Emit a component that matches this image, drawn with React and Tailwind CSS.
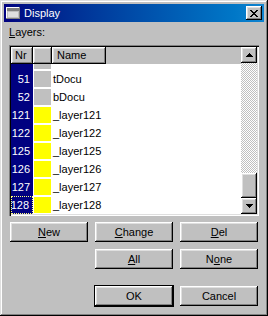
import React from "react";

const raised =
  "shadow-[inset_-1px_-1px_0_#000,inset_1px_1px_0_#fff,inset_-2px_-2px_0_#808080,inset_2px_2px_0_#dfdfdf]";

function Btn({ children, className = "" }) {
  return (
    <div
      className={`h-[20px] w-[78px] flex items-center justify-center bg-[#c0c0c0] text-[11px] text-black shadow-[inset_-1px_-1px_0_#000,inset_1px_1px_0_#fff,inset_-2px_-2px_0_#808080,inset_2px_2px_0_#dfdfdf] ${className}`}
    >
      {children}
    </div>
  );
}

function ArrowUp() {
  return (
    <svg width="7" height="4" viewBox="0 0 7 4" shapeRendering="crispEdges">
      <rect x="3" y="0" width="1" height="1" fill="#000" />
      <rect x="2" y="1" width="3" height="1" fill="#000" />
      <rect x="1" y="2" width="5" height="1" fill="#000" />
      <rect x="0" y="3" width="7" height="1" fill="#000" />
    </svg>
  );
}

function ArrowDown() {
  return (
    <svg width="7" height="4" viewBox="0 0 7 4" shapeRendering="crispEdges">
      <rect x="0" y="0" width="7" height="1" fill="#000" />
      <rect x="1" y="1" width="5" height="1" fill="#000" />
      <rect x="2" y="2" width="3" height="1" fill="#000" />
      <rect x="3" y="3" width="1" height="1" fill="#000" />
    </svg>
  );
}

function CloseGlyph() {
  const rows = [
    "XX....XX",
    ".XX..XX.",
    "..XXXX..",
    "...XX...",
    "..XXXX..",
    ".XX..XX.",
    "XX....XX",
  ];
  const rects = [];
  rows.forEach((r, y) =>
    r.split("").forEach((c, x) => {
      if (c === "X") rects.push(<rect key={`${x}-${y}`} x={x} y={y} width="1" height="1" fill="#000" />);
    })
  );
  return (
    <svg width="8" height="7" viewBox="0 0 8 7" shapeRendering="crispEdges">
      {rects}
    </svg>
  );
}

function TitleIcon() {
  return (
    <svg width="14" height="12" viewBox="0 0 14 12" shapeRendering="crispEdges">
      <rect x="0" y="0" width="14" height="12" fill="#808080" />
      <rect x="0" y="0" width="13" height="11" fill="#fff" />
      <rect x="1" y="1" width="12" height="10" fill="#c0c0c0" />
      <rect x="1" y="1" width="12" height="3" fill="#808080" />
      <rect x="2" y="5" width="10" height="5" fill="#dfdfdf" />
    </svg>
  );
}

const rows = [
  { nr: 50, name: "", color: "#c0c0c0" },
  { nr: 51, name: "tDocu", color: "#c0c0c0" },
  { nr: 52, name: "bDocu", color: "#c0c0c0" },
  { nr: 121, name: "_layer121", color: "#ffff00" },
  { nr: 122, name: "_layer122", color: "#ffff00" },
  { nr: 125, name: "_layer125", color: "#ffff00" },
  { nr: 126, name: "_layer126", color: "#ffff00" },
  { nr: 127, name: "_layer127", color: "#ffff00" },
  { nr: 128, name: "_layer128", color: "#ffff00", focus: true },
];

export default function App() {
  return (
    <div className="w-[268px] h-[316px] bg-[#c0c0c0] p-[4px] flex flex-col font-['Liberation_Sans',Arial,sans-serif] text-[11px] leading-[13px] text-black shadow-[inset_-1px_-1px_0_#000,inset_1px_1px_0_#dfdfdf,inset_-2px_-2px_0_#808080,inset_2px_2px_0_#fff]">
      {/* Title bar */}
      <div className="h-[18px] flex items-center bg-gradient-to-r from-[#000080] to-[#1084d0] text-white">
        <div className="ml-[2px] w-[14px] h-[12px] flex">
          <TitleIcon />
        </div>
        <div className="ml-[4px] text-[11px]">Display</div>
        <div className="flex-1" />
        <div className={`mr-[2px] w-[16px] h-[14px] bg-[#c0c0c0] flex items-center justify-center ${raised}`}>
          <CloseGlyph />
        </div>
      </div>

      {/* Content */}
      <div className="flex flex-col px-[5px]">
        <div className="mt-[4px] h-[13px]">
          <span className="underline">L</span>ayers:
        </div>

        {/* List view */}
        <div className="mt-[6px] h-[171px] w-[250px] p-[2px] bg-white flex shadow-[inset_1px_1px_0_#808080,inset_2px_2px_0_#000,inset_-1px_-1px_0_#fff,inset_-2px_-2px_0_#dfdfdf]">
          <div className="flex-1 flex flex-col min-w-0">
            {/* Header */}
            <div className="h-[17px] flex bg-[#c0c0c0] shrink-0">
              <div className={`w-[22px] pl-[4px] flex items-center ${raised}`}>Nr</div>
              <div className={`w-[19px] ${raised}`} />
              <div className={`w-[54px] pl-[5px] flex items-center ${raised}`}>Name</div>
              <div className="flex-1" />
            </div>
            {/* Rows */}
            <div className="flex-1 overflow-hidden">
              <div className="-mt-[12px] flex flex-col">
                {rows.map((r) => (
                  <div key={r.nr} className="h-[18px] flex shrink-0">
                    <div
                      className={`w-[22px] bg-[#000080] text-white flex items-center justify-end pr-[3px] ${
                        r.focus ? "border border-dotted border-[#ffff7f] pr-[2px]" : ""
                      }`}
                    >
                      {r.focus || r.nr !== 50 ? r.nr : ""}
                    </div>
                    <div className="w-[1px]" />
                    <div className="w-[17px] py-[1px]">
                      <div className="w-[17px] h-[16px]" style={{ backgroundColor: r.color }} />
                    </div>
                    <div className="pl-[2px] flex items-center">{r.name}</div>
                  </div>
                ))}
              </div>
            </div>
          </div>
          {/* Scrollbar */}
          <div className="w-[16px] flex flex-col">
            <div className={`h-[16px] bg-[#c0c0c0] flex items-center justify-center ${raised}`}>
              <ArrowUp />
            </div>
            <div className="flex-1 bg-[conic-gradient(#fff_25%,#c0c0c0_0_50%,#fff_0_75%,#c0c0c0_0)] bg-[length:2px_2px]" />
            <div className={`h-[25px] bg-[#c0c0c0] ${raised}`} />
            <div className={`h-[16px] bg-[#c0c0c0] flex items-center justify-center ${raised}`}>
              <ArrowDown />
            </div>
          </div>
        </div>

        {/* Buttons */}
        <div className="mt-[6px] px-[1px] grid grid-cols-[78px_78px_78px] gap-x-[7px] items-center">
          <Btn>
            <span className="underline">N</span>ew
          </Btn>
          <Btn>
            <span className="underline">C</span>hange
          </Btn>
          <Btn>
            <span className="underline">D</span>el
          </Btn>

          <div className="mt-[7px]" />
          <Btn className="mt-[7px]">
            <span className="underline">A</span>ll
          </Btn>
          <Btn className="mt-[7px]">
            N<span className="underline">o</span>ne
          </Btn>

          <div className="mt-[16px]" />
          <div className="mt-[16px] -mx-[1px] w-[80px] h-[22px] border border-black">
            <Btn>OK</Btn>
          </div>
          <Btn className="mt-[16px]">Cancel</Btn>
        </div>
      </div>
    </div>
  );
}
